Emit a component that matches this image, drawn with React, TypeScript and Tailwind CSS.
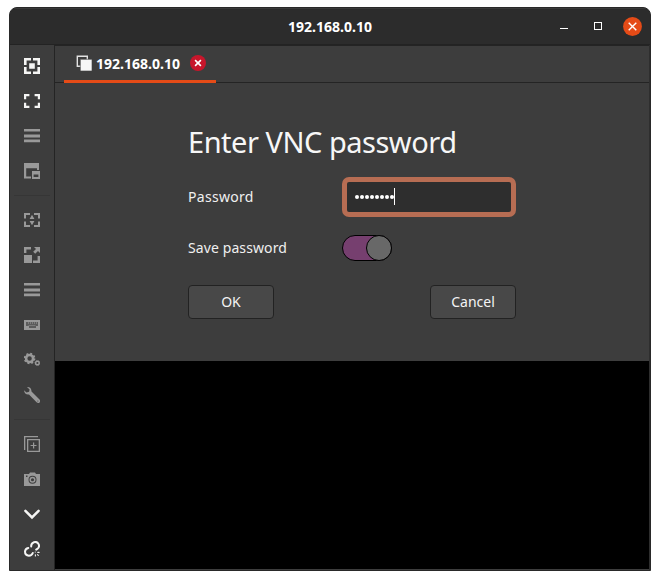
import type { ReactNode } from "react";

function Icon({ children, bright = false }: { children: ReactNode; bright?: boolean }) {
  return (
    <svg
      width="16"
      height="16"
      viewBox="0 0 16 16"
      fill="currentColor"
      className={bright ? "block shrink-0 text-[#f5f5f4]" : "block shrink-0 text-[#999999]"}
    >
      {children}
    </svg>
  );
}

function Separator() {
  return <div className="-my-[3px] h-px w-9 shrink-0 bg-[#363636]" />;
}

function Menu() {
  return (
    <Icon>
      <path d="M0 1h16v2.6H0zM0 6.4h16v3H0zM0 11.6h16v2.6H0z" />
    </Icon>
  );
}

function Sidebar() {
  return (
    <aside className="flex w-[45px] shrink-0 flex-col items-center gap-[19px] border-r border-[#242424] bg-[#3d3d3d] pt-[13px]">
      <Icon bright>
        <path d="M0 0h7v2.6H2.6V7H0zM9 0h7v7h-2.6V2.6H9zM0 9h2.6v4.4H7V16H0zM13.4 9H16v7H9v-2.6h4.4zM5.2 5.2h5.6v5.6H5.2z" />
      </Icon>
      <Icon bright>
        <path d="M0 1h5.4v2.3H2.2v2.9H0zM10.6 1H16v5.2h-2.2V3.3h-3.2zM0 9.8h2.2v2.9h3.2V15H0zM13.8 9.8H16V15h-5.4v-2.3h3.2z" />
      </Icon>
      <Menu />
      <Icon>
        <path fillRule="evenodd" d="M0 0h15v7h-2V5.2H2.2v8.2H7V15.5H0zM8 8h8v8H8zM9.6 11.5v2.6h4.8v-2.6z" />
      </Icon>
      <Separator />
      <Icon>
        <path d="M0 1h6v2H2v3.5H0zM10 1h6v5.5h-2V3h-4zM0 9.5h2V13h4v2H0zM14 9.5h2V15h-6v-2h4zM8 2.8l2.4 4.2H5.6zM8 13.2L5.6 9h4.8z" />
      </Icon>
      <Icon>
        <path d="M0 8h8v8H0zM0 0h7v2.4H2.4V6H0zM10 0h6v6l-2-2-2.8 2.8-2-2L12 2zM13.6 9H16v7H9v-2.4h4.6z" />
      </Icon>
      <Menu />
      <Icon>
        <path d="M0 3h16v10H0z" />
        <path d="M2 5h12v4h-2v2H5V9H2z" fill="#5c5c5c" />
        <path d="M4 5h.8v2H4zm2 0h.8v2H6zm2 0h.8v2H8zm2 0h.8v2H10zm2 0h.8v2H12zM4.5 8h7v.8h-7z" opacity=".7" />
      </Icon>
      <Icon>
        <g fill="none" stroke="currentColor">
          <circle cx="5.6" cy="6.5" r="3.5" strokeWidth="2.6" />
          <circle cx="5.6" cy="6.5" r="5" strokeWidth="1.6" strokeDasharray="1.96 1.967" />
          <circle cx="13.4" cy="11" r="1.8" strokeWidth="1.4" />
          <circle cx="13.4" cy="11" r="2.5" strokeWidth=".8" strokeDasharray=".98 .983" />
        </g>
      </Icon>
      <Icon>
        <path d="M3 .1C4.9-.3 7 .9 7.3 3l.2 1.6 8 7.9c.9.9.8 2.2.1 2.9-.8.8-2.1.7-3-.2L5 7.5C2.6 8.1.2 6.4 0 3.3l2.5 2.2 2.6-.7.5-2.3z" />
        <circle cx="13.9" cy="14" r=".5" fill="#3d3d3d" />
      </Icon>
      <Separator />
      <Icon>
        <path fillRule="evenodd" d="M0 0h14v1.3H1.3V14H0zM3 3h13v13H3zM4.3 4.3v10.4h10.4V4.3zM9 6.5h1.2v2.4h2.3v1.2h-2.3v2.4H9v-2.4H6.6V8.9H9z" />
      </Icon>
      <Icon>
        <path fillRule="evenodd" d="M0 3h5l1-1.6h5L12 3h4v12H0zM8.5 4.7a4 4 0 1 0 0 8 4 4 0 0 0 0-8zM2 4.5V6h1.5V4.5z" />
        <circle cx="8.5" cy="8.7" r="2.3" fill="none" stroke="currentColor" strokeWidth="1.5" />
      </Icon>
      <Icon bright>
        <path d="M1.4 4.8L8 11.4l6.6-6.6" fill="none" stroke="currentColor" strokeWidth="2.5" strokeLinecap="round" />
      </Icon>
      <Icon bright>
        <g fill="none" stroke="currentColor" strokeWidth="2" strokeLinecap="round">
          <path d="M7.2 5.4c-.2-1.8.8-3.3 2.5-4.1 1.9-.7 4 .1 4.9 1.8.8 1.8.2 3.8-1.3 4.9l-1.1.6" />
          <path d="M4.3 6.9C2.4 7.3 1.1 8.8 1 10.6 1 12.900 2.700 14.600 4.900 14.700c1.900 0 3.300-1.100 3.900-2.700" />
          <path d="M11.2 11v.1M13.8 11.4h1.3M11.4 13.8v1.2M13.6 13.6l.7.7" strokeWidth="1.1" />
        </g>
      </Icon>
    </aside>
  );
}

function TitleBar() {
  return (
    <header className="flex h-[37px] shrink-0 items-center border-b border-[#232323] border-t border-t-[#3a3a3a] bg-[#2c2c2c] pr-2">
      <div className="w-[99px] shrink-0" />
      <h1 className="flex-1 text-center text-[14px] font-bold tracking-[0.02px] text-white">
        192.168.0.10
      </h1>
      <div className="flex w-[91px] shrink-0 items-center">
        <span className="ml-[9px] mt-[4px] h-px w-2 bg-white" />
        <span className="ml-[26px] size-2 -mt-px border border-white" />
        <svg className="-mt-px ml-[21px]" width="19" height="19" viewBox="0 0 19 19">
          <circle cx="9.5" cy="9.5" r="9.4" fill="#e54b17" />
          <path d="M5.7 5.7l7.6 7.6m0-7.6l-7.6 7.6" stroke="white" strokeWidth="1.4" />
        </svg>
      </div>
    </header>
  );
}

function TabBar() {
  return (
    <div className="flex h-[38px] shrink-0 border-b border-t border-[#242424] pl-[9px]">
      <div className="-mb-px flex w-[152px] items-center border-b-[3px] border-[#e54b17] pl-3">
        <svg width="16" height="16" viewBox="0 0 16 16" className="shrink-0">
          <path d="M1.3 1.3h10v10h-10z" fill="none" stroke="#e2e2e2" strokeWidth="1.4" />
          <path d="M4.3 4.3H16V16H4.3z" fill="#f7f7f7" stroke="#3d3d3d" strokeWidth=".6" />
        </svg>
        <span className="ml-1 w-[85px] text-[14px] font-bold tracking-[0.02px] text-white">192.168.0.10</span>
        <svg className="ml-[9px] shrink-0" width="16" height="16" viewBox="0 0 16 16">
          <circle cx="8" cy="8" r="8" fill="#c7162b" />
          <path d="M5.1 5.1l5.8 5.8m0-5.8l-5.8 5.8" stroke="white" strokeWidth="1.6" />
        </svg>
      </div>
    </div>
  );
}

const buttonClass =
  "h-[34px] w-[86px] rounded-[4px] border border-[#222222] bg-[#484848] text-[14px] leading-8 text-[#f4f4f4]";

function PasswordForm() {
  return (
    <form className="h-[278px] shrink-0 bg-[#3d3d3d] pl-[133px] pt-[38px]">
      <div className="w-[328px] text-[14px] text-[#f0f0f0]">
        <h2 className="h-14 whitespace-nowrap text-[29px] leading-[42px] tracking-[-0.48px] text-[#f7f7f7]">
          Enter VNC password
        </h2>
        <div className="flex h-10 items-center">
          <span className="w-[154px] pb-[2px] tracking-[0.3px]">Password</span>
          <div className="flex h-10 flex-1 items-center rounded-[7px] border-[5px] border-[#b76d53] bg-[#2e2e2e] pl-2">
            <span className="flex gap-px">
              {Array.from({ length: 8 }, (_, i) => (
                <i key={i} className="size-1 rounded-full bg-white" />
              ))}
            </span>
            <span className="-mt-[2px] h-[17px] w-px bg-white" />
          </div>
        </div>
        <div className="mt-[18px] flex h-[26px] items-center">
          <span className="w-[154px] pb-[2px] tracking-[0.1px]">Save password</span>
          <div className="flex h-[26px] w-[50px] justify-end rounded-full border border-black bg-[#763f6f]">
            <span className="-mr-px -mt-px size-[26px] rounded-full border border-black bg-[#686868]" />
          </div>
        </div>
        <div className="mt-6 flex justify-between">
          <button type="button" className={buttonClass}>OK</button>
          <button type="button" className={buttonClass}>Cancel</button>
        </div>
      </div>
    </form>
  );
}

export default function App() {
  return (
    <div className="h-[580px] w-[660px] bg-white pl-[9px] pt-[7px] font-['Noto_Sans',sans-serif]">
      <div className="flex h-[564px] w-[642px] flex-col overflow-hidden rounded-t-[8px] border border-[#292929] bg-[#2e2e2e]">
        <TitleBar />
        <div className="flex min-h-0 flex-1">
          <Sidebar />
          <main className="mr-px flex min-w-0 flex-1 flex-col bg-[#3d3d3d]">
            <TabBar />
            <PasswordForm />
            <div className="mb-px flex-1 bg-black" />
          </main>
        </div>
      </div>
    </div>
  );
}
